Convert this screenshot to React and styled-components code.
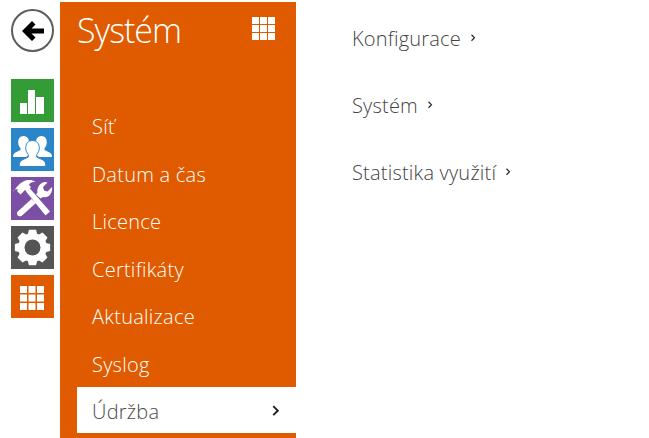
import React from "react";
import styled, { createGlobalStyle } from "styled-components";

const GlobalStyle = createGlobalStyle`
  html, body {
    margin: 0;
    padding: 0;
    height: 100%;
    background: #fff;
    overflow: hidden;
  }
  body {
    font-family: "Open Sans", "Noto Sans", "Liberation Sans", sans-serif;
    font-weight: 300;
  }
`;

const Page = styled.div`
  display: flex;
  width: 649px;
  height: 438px;
  overflow: hidden;
`;

const IconRail = styled.nav`
  display: flex;
  flex-direction: column;
  align-items: center;
  width: 60px;
  padding: 9px 0 0 5px;
  box-sizing: border-box;
`;

const BackButton = styled.div`
  display: flex;
  align-items: center;
  justify-content: center;
  width: 43px;
  height: 43px;
  box-sizing: border-box;
  border: 2px solid #5c5c5c;
  border-radius: 50%;
  margin-bottom: 27px;
`;

const Tile = styled.div`
  width: 43px;
  height: 43px;
  margin-bottom: 6px;
  background: ${(props) => props.color};

  svg {
    display: block;
  }
`;

const Panel = styled.aside`
  display: flex;
  flex-direction: column;
  width: 236px;
  height: 436px;
  margin-top: 2px;
  padding-left: 17px;
  box-sizing: border-box;
  background: #e05a00;
`;

const PanelHeader = styled.header`
  display: flex;
  justify-content: space-between;
  height: 100px;
  padding: 4px 21px 0 0;
  box-sizing: border-box;
`;

const PanelTitle = styled.h1`
  margin: 0;
  color: #fff;
  font-size: 34px;
  font-weight: 300;
  letter-spacing: -1px;
  line-height: 48px;
`;

const HeaderGrid = styled.div`
  margin-top: 11px;
`;

const Menu = styled.ul`
  list-style: none;
  margin: 0;
  padding: 0;
`;

const MenuItem = styled.li`
  display: flex;
  align-items: center;
  justify-content: space-between;
  height: ${(props) => (props.$active ? "46px" : "47.5px")};
  padding: 2px 16px 0 15px;
  box-sizing: border-box;
  color: ${(props) => (props.$active ? "#4a4a4a" : "#fff")};
  background: ${(props) => (props.$active ? "#fff" : "transparent")};
  font-size: 20px;
  font-weight: 300;
  letter-spacing: 0.25px;
`;

const Content = styled.main`
  display: flex;
  flex-direction: column;
  padding: 18px 0 0 56px;
`;

const ContentLink = styled.div`
  display: flex;
  align-items: center;
  gap: 9px;
  height: 40px;
  margin-bottom: 27px;
  color: #444;
  font-size: 20px;
  font-weight: 300;
  letter-spacing: 0.2px;
`;

const Chevron = ({ size = 8, width = 1.6 }) => (
  <svg width={size} height={size * 1.25} viewBox="0 0 8 10" fill="none">
    <path d="M2 1l4 4-4 4" stroke="#222" strokeWidth={width} />
  </svg>
);

const GridCells = ({ cell, gap, x = 0, y = 0 }) =>
  [0, 1, 2].map((row) =>
    [0, 1, 2].map((col) => (
      <rect
        key={`${row}-${col}`}
        x={x + col * (cell + gap)}
        y={y + row * (cell + gap)}
        width={cell}
        height={cell}
        fill="#fff"
      />
    ))
  );

// 8 toothed gear outline, centre and radii in tile coordinates
const gearPath = (cx, cy, outer, inner) => {
  const points = [];
  for (let i = 0; i < 8; i++) {
    const a = (i * Math.PI) / 4 - Math.PI / 2;
    [
      [inner, -0.32],
      [outer, -0.2],
      [outer, 0.2],
      [inner, 0.32],
    ].forEach(([r, d]) => {
      points.push(`${(cx + r * Math.cos(a + d)).toFixed(2)} ${(cy + r * Math.sin(a + d)).toFixed(2)}`);
    });
  }
  return `M${points.join("L")}z`;
};

const TileIcon = ({ children }) => (
  <svg width="43" height="43" viewBox="0 0 43 43">
    {children}
  </svg>
);

const SidePerson = ({ flip }) => (
  <path
    transform={flip ? "matrix(-1 0 0 1 43 0)" : undefined}
    fill="#fff"
    d="M12.500 8c3.500 0 5.500 2.800 5.500 6.200 0 2.500-.8 4.500-2.300 6v2.300c1.500.8 3.300 1.800 4.300 3L15 29H2.200c-.4-2.300.6-3.800 2.300-4.600l5-2.400v-2c-1.500-1.400-2.300-3.300-2.300-5.800C7.200 10.800 9 8 12.500 8z"
  />
);

const menuItems = ["Síť", "Datum a čas", "Licence", "Certifikáty", "Aktualizace", "Syslog"];
const links = ["Konfigurace", "Systém", "Statistika využití"];

const App = () => (
  <Page>
    <GlobalStyle />
    <IconRail>
      <BackButton>
        <svg width="24" height="24" viewBox="0 0 24 24">
          <path d="M1 12L11 2l3.500 3.500-4 4H23v5H10.500l4 4L11 22z" fill="#000" />
        </svg>
      </BackButton>
      <Tile color="#349c36">
        <TileIcon>
          <rect x="9" y="24" width="7" height="11" fill="#fff" />
          <rect x="17" y="11" width="7" height="24" fill="#fff" />
          <rect x="25" y="18" width="8" height="17" fill="#fff" />
        </TileIcon>
      </Tile>
      <Tile color="#2b86c9">
        <TileIcon>
          <SidePerson />
          <SidePerson flip />
          <path
            fill="#fff"
            stroke="#2b86c9"
            strokeWidth="1"
            d="M21.500 12.500c4.300 0 6.800 3.200 6.800 7.300 0 2.800-1 5-2.600 6.600v2.600l6.300 3c2 1 2.800 2.800 2.800 6.500H8.200c0-3.700.8-5.500 2.800-6.500l6.300-3v-2.600c-1.600-1.600-2.600-3.800-2.600-6.600 0-4.100 2.500-7.300 6.800-7.300z"
          />
        </TileIcon>
      </Tile>
      <Tile color="#7b4fa3">
        <TileIcon>
          <path fill="#fff" d="M2 14.500l3-3.500c3-4 7-7.500 12-8 3-.3 5.500.3 7.500 2-3.500-.3-6 .8-6.500 3l2 2-4 4.500-2-1.500-4.500 4.500-3.500-3.500 1-1.500c-1.500-.3-3-.3-5 1.500z" />
          <path fill="#fff" d="M15 14.500l3.500-3.500L39 34.500l-4.500 4z" />
          <path fill="#fff" d="M29.500 21.500l-4.500-4 1.500-2c-1-4.500 2.500-10.500 8-10.500l2 .5-4.500 4.500 1 3.500 3.500 1 4.500-4.500c1 6-3.500 11.500-9 10z" />
          <path fill="#fff" d="M20.500 22l4.500 4-14 12.500c-1.500 1.200-3.200 1-4.200 0s-1.300-2.700 0-4z" />
        </TileIcon>
      </Tile>
      <Tile color="#555">
        <TileIcon>
          <path fill="#fff" d={gearPath(21.5, 21.5, 18, 14.5)} />
          <circle cx="21.500" cy="21.500" r="8" fill="#555" />
        </TileIcon>
      </Tile>
      <Tile color="#e05a00">
        <TileIcon>
          <GridCells cell={7} gap={1.5} x={9} y={11} />
        </TileIcon>
      </Tile>
    </IconRail>
    <Panel>
      <PanelHeader>
        <PanelTitle>Systém</PanelTitle>
        <HeaderGrid>
          <svg width="23" height="23" viewBox="0 0 23 23">
            <GridCells cell={7} gap={1} />
          </svg>
        </HeaderGrid>
      </PanelHeader>
      <Menu>
        {menuItems.map((item) => (
          <MenuItem key={item}>{item}</MenuItem>
        ))}
        <MenuItem $active>
          Údržba
          <Chevron size={9} width={1.8} />
        </MenuItem>
      </Menu>
    </Panel>
    <Content>
      {links.map((link) => (
        <ContentLink key={link}>
          {link}
          <Chevron size={6} width={1.5} />
        </ContentLink>
      ))}
    </Content>
  </Page>
);

export default App;
